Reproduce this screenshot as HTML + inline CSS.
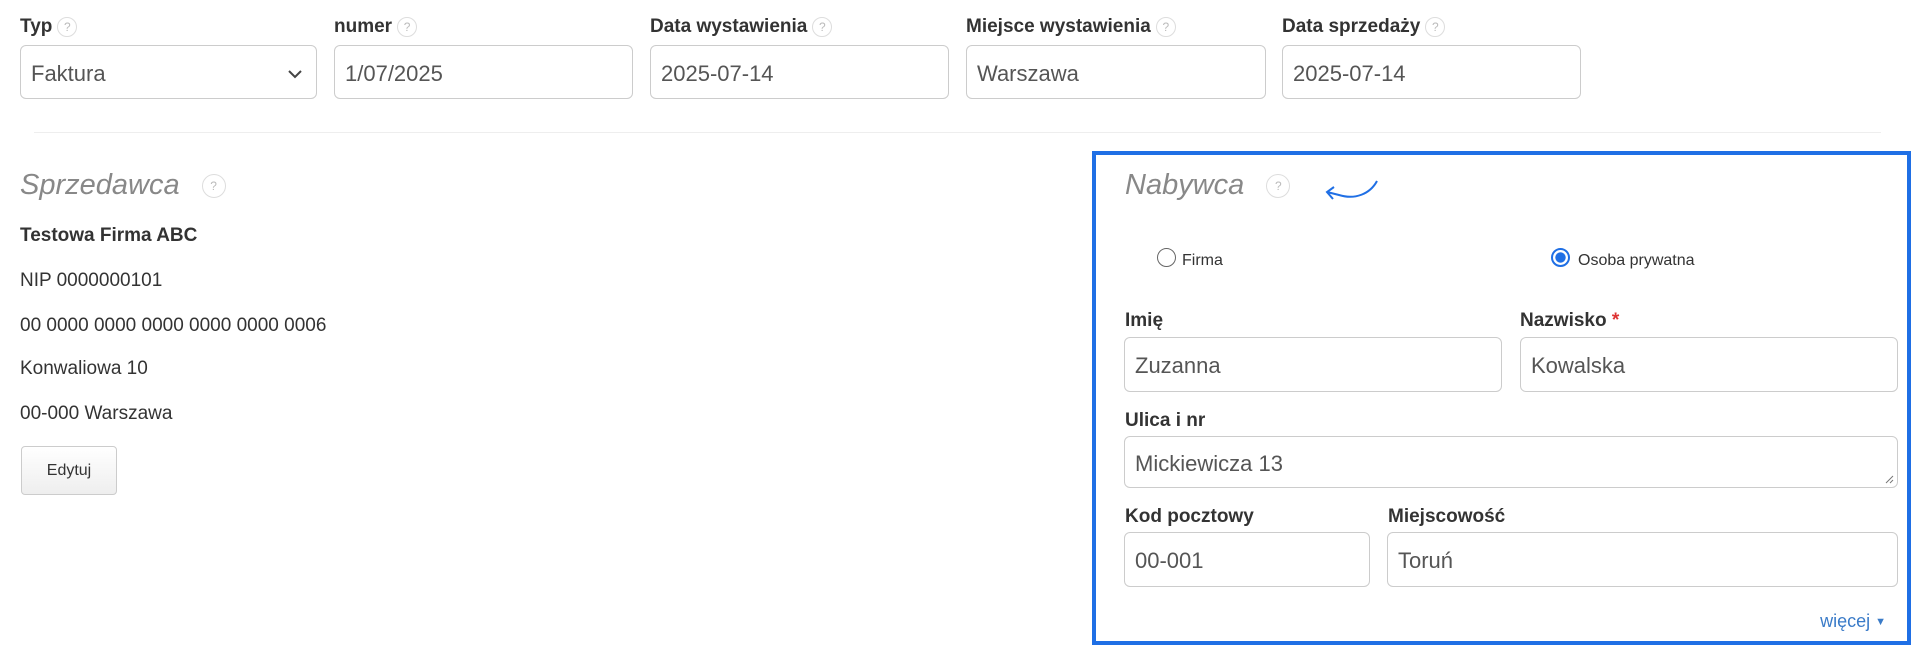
<!DOCTYPE html>
<html><head><meta charset="utf-8"><style>
*{box-sizing:border-box;margin:0;padding:0}
body{width:1920px;height:666px;background:#fff;font-family:"Liberation Sans",Arial,sans-serif;color:#333;position:relative;overflow:hidden}
.a{position:absolute}
.lbl{font-weight:bold;font-size:19px;color:#333;white-space:nowrap}
.q{display:inline-block;width:20px;height:20px;border:1px solid #ddd;border-radius:50%;color:#bbb;font-size:12px;font-weight:normal;text-align:center;line-height:18px;vertical-align:middle;margin-left:5px}
.inp{border:1px solid #ccc;border-radius:6px;font-size:22px;color:#555;padding-left:10px;padding-top:3px;display:flex;align-items:center;background:#fff;white-space:nowrap}
.txt{font-size:19px;color:#333;white-space:nowrap}
h2{font-weight:normal;font-style:italic;font-size:29px;color:#888;white-space:nowrap}
</style></head><body>
<div class="a lbl" style="left:20px;top:16px">Typ<span class="q">?</span></div>
<div class="a lbl" style="left:334px;top:16px">numer<span class="q">?</span></div>
<div class="a lbl" style="left:650px;top:16px">Data wystawienia<span class="q">?</span></div>
<div class="a lbl" style="left:966px;top:16px">Miejsce wystawienia<span class="q">?</span></div>
<div class="a lbl" style="left:1282px;top:16px">Data sprzedaży<span class="q">?</span></div>
<div class="a inp" style="left:20px;top:45px;width:297px;height:54px">Faktura<svg style="position:absolute;right:14px;top:24px" width="14" height="9"><path d="M1 1L7 7L13 1" stroke="#444" stroke-width="2" fill="none"/></svg></div>
<div class="a inp" style="left:334px;top:45px;width:299px;height:54px">1/07/2025</div>
<div class="a inp" style="left:650px;top:45px;width:299px;height:54px">2025-07-14</div>
<div class="a inp" style="left:966px;top:45px;width:300px;height:54px">Warszawa</div>
<div class="a inp" style="left:1282px;top:45px;width:299px;height:54px">2025-07-14</div>
<div class="a" style="left:34px;top:132px;width:1847px;height:1px;background:#eee"></div>

<h2 class="a" style="left:20px;top:169px">Sprzedawca<span class="q" style="margin-left:22px;width:24px;height:24px;line-height:22px;font-style:normal">?</span></h2>
<div class="a txt" style="left:20px;top:225px;font-weight:bold">Testowa Firma ABC</div>
<div class="a txt" style="left:20px;top:270px">NIP 0000000101</div>
<div class="a txt" style="left:20px;top:315px">00 0000 0000 0000 0000 0000 0006</div>
<div class="a txt" style="left:20px;top:358px">Konwaliowa 10</div>
<div class="a txt" style="left:20px;top:403px">00-000 Warszawa</div>
<div class="a" style="left:21px;top:446px;width:96px;height:49px;border:1px solid #ccc;border-radius:4px;background:linear-gradient(#fff,#eee);font-size:16px;color:#333;text-align:center;line-height:47px">Edytuj</div>

<div class="a" style="left:1092px;top:151px;width:819px;height:494px;border:4px solid #1f6fe5"></div>
<h2 class="a" style="left:1125px;top:169px">Nabywca<span class="q" style="margin-left:22px;width:24px;height:24px;line-height:22px;font-style:normal">?</span></h2>
<svg class="a" style="left:1315px;top:178px" width="68" height="24"><path d="M62 3C55 16 40 22 24 17Q16 15 12 14" stroke="#1f6fe5" stroke-width="2" fill="none"/><path d="M19 9L12 14L18 21" stroke="#1f6fe5" stroke-width="2" fill="none"/></svg>
<div class="a" style="left:1157px;top:248px;width:19px;height:19px;border:1.5px solid #666;border-radius:50%"></div>
<div class="a txt" style="left:1182px;top:252px;font-size:16px">Firma</div>
<div class="a" style="left:1551px;top:248px;width:19px;height:19px;border:2px solid #1f6fe5;border-radius:50%;background:radial-gradient(#1f6fe5 45%,#fff 52%)"></div>
<div class="a txt" style="left:1578px;top:252px;font-size:16px">Osoba prywatna</div>

<div class="a lbl" style="left:1125px;top:310px">Imię</div>
<div class="a lbl" style="left:1520px;top:310px">Nazwisko <span style="color:#d33">*</span></div>
<div class="a inp" style="left:1124px;top:337px;width:378px;height:55px">Zuzanna</div>
<div class="a inp" style="left:1520px;top:337px;width:378px;height:55px">Kowalska</div>
<div class="a lbl" style="left:1125px;top:410px">Ulica i nr</div>
<div class="a inp" style="left:1124px;top:436px;width:774px;height:52px">Mickiewicza 13<svg style="position:absolute;right:3px;bottom:3px" width="9" height="9"><path d="M1 8L8 1M5 8L8 5" stroke="#777"/></svg></div>
<div class="a lbl" style="left:1125px;top:506px">Kod pocztowy</div>
<div class="a lbl" style="left:1388px;top:506px">Miejscowość</div>
<div class="a inp" style="left:1124px;top:532px;width:246px;height:55px">00-001</div>
<div class="a inp" style="left:1387px;top:532px;width:511px;height:55px">Toruń</div>
<div class="a" style="right:34px;top:611px;font-size:18px;color:#3a7bc8">więcej <span style="font-size:11px;vertical-align:2px">▼</span></div>
</body></html>
